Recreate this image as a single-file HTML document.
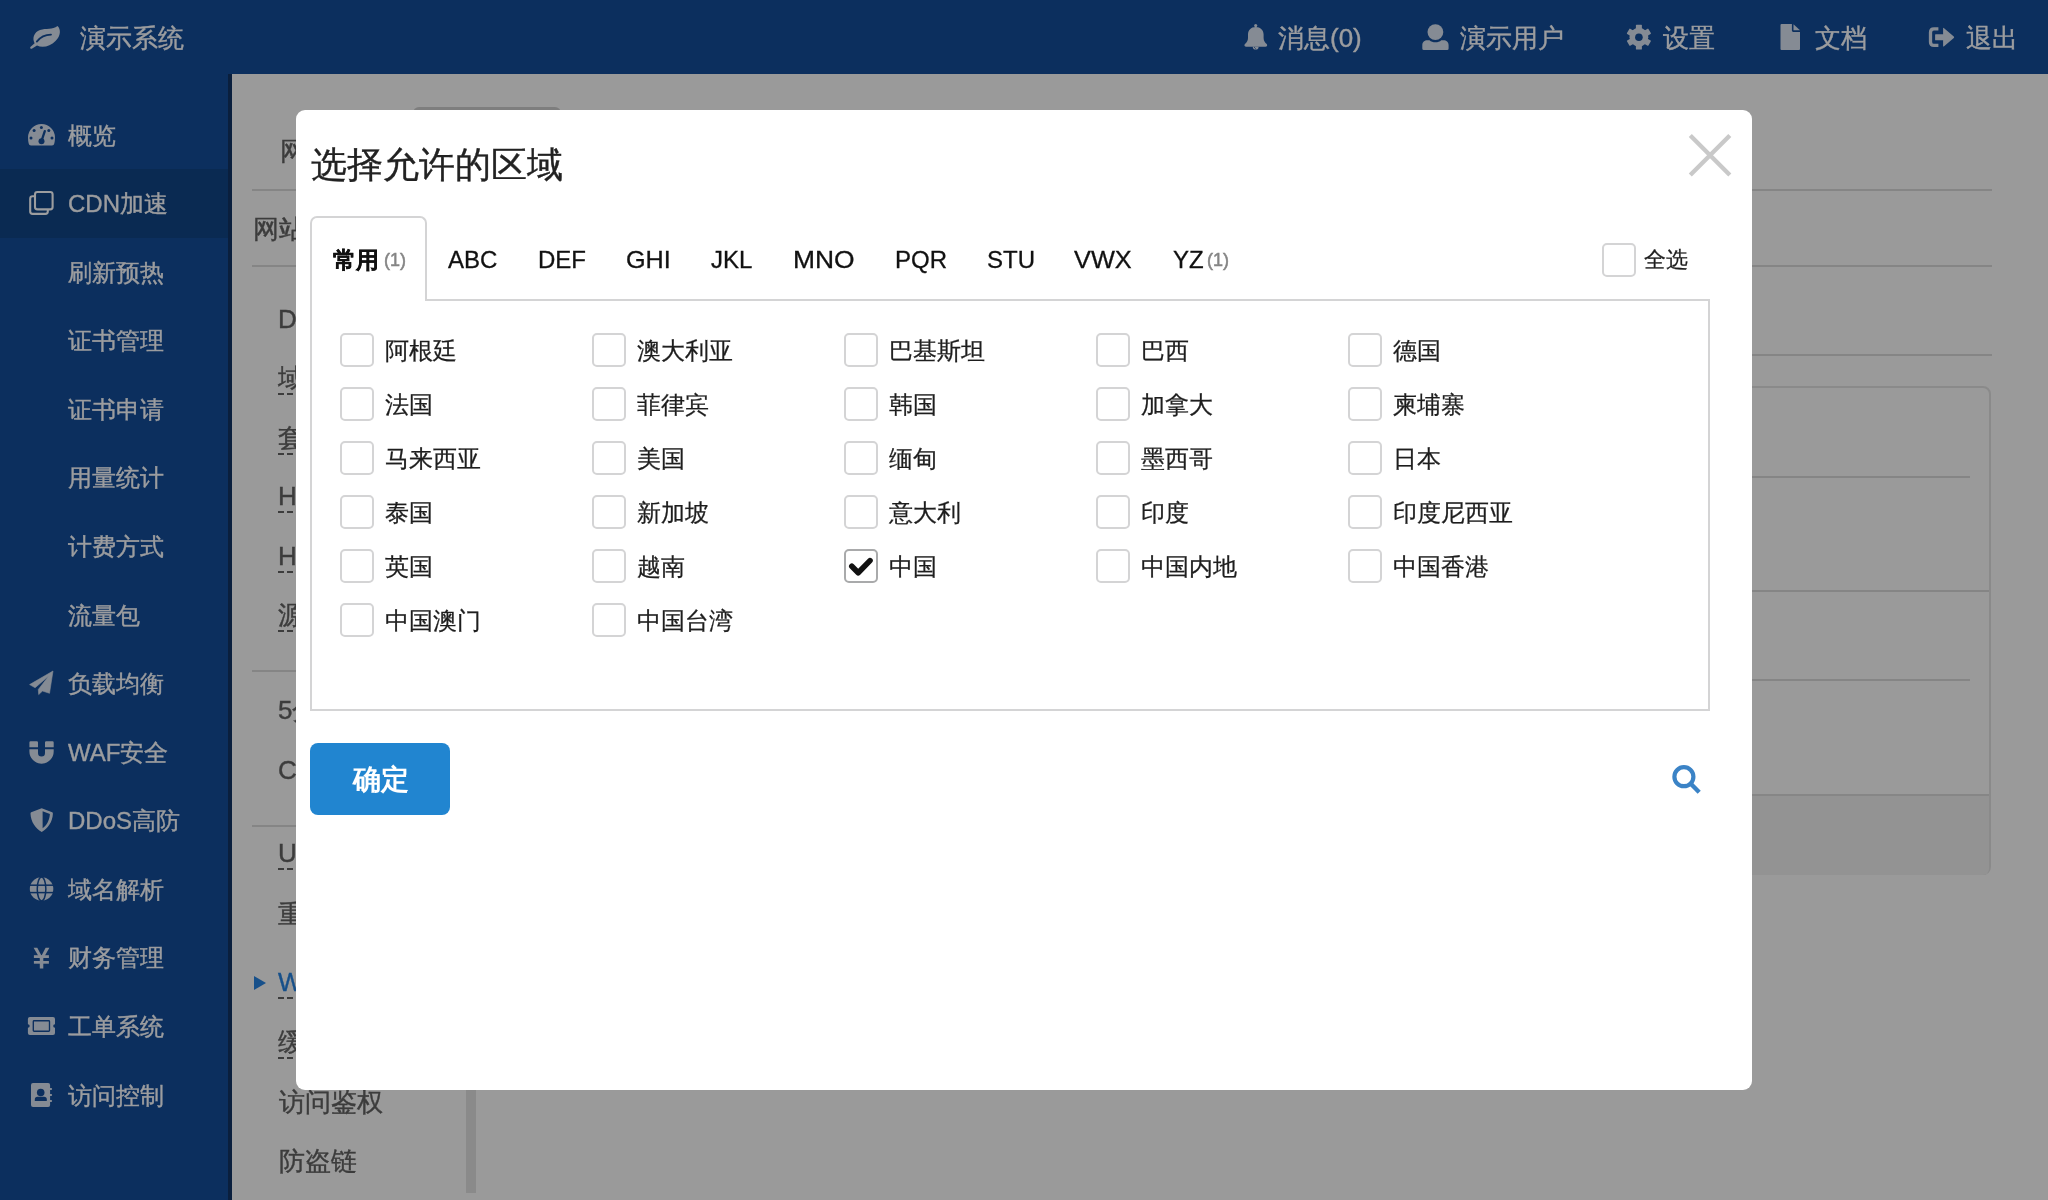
<!DOCTYPE html><html><head><meta charset="utf-8"><style>
html,body{margin:0;padding:0;width:2048px;height:1200px;overflow:hidden;background:#9a9a9a;font-family:"Liberation Sans", sans-serif;}
.t{position:absolute;white-space:nowrap;will-change:transform;}
.a{position:absolute;}
</style></head><body>
<div class="a" style="left:0;top:0;width:2048px;height:74px;background:#0c2f5e"></div>
<svg class="a" style="left:24px;top:20px" width="44" height="34" viewBox="24 20 44 34"><path d="M57.5 26 C61 29 61 36 55.5 41 C50.5 46 43 48.5 37 45.6 L32.2 48.6 C31 49.3 29.6 48.2 30.4 47 L34.6 43.2 C32 38.5 33.8 32.2 40 30 C46 28 52.5 30 57.5 26 Z" fill="#858b94"/><path d="M36.8 41.6 C40.5 36.8 44.5 34.6 51 34.6" fill="none" stroke="#0c2f5e" stroke-width="1.8" stroke-linecap="round"/></svg>
<div class="t" style="left:80px;top:25.0px;font-size:26px;line-height:26px;color:#9c9d9f;font-weight:normal;-webkit-text-stroke:0.4px currentColor;">演示系统</div>
<svg class="a" style="left:1238px;top:18px" width="36" height="38" viewBox="1238 18 36 38"><path d="M1255.7 26.9 C1251 26.9 1248 30.2 1248 34.5 V38 C1248 41 1246.5 42.6 1244.9 44.1 Q1244.1 45 1244.6 45.9 Q1245.1 46.7 1246.2 46.7 H1265.4 Q1266.5 46.7 1267 45.9 Q1267.5 45 1266.7 44.1 C1265.1 42.6 1263.6 41 1263.6 38 V34.5 C1263.6 30.2 1260.5 26.9 1255.7 26.9 Z" fill="#858b94"/><circle cx="1255.7" cy="25.6" r="1.6" fill="#858b94"/><path d="M1252.8 46.7 A2.9 2.9 0 0 0 1258.6 46.7 Z" fill="#858b94"/><path d="M1254.2 47.2 L1255.6 48.6" stroke="#0c2f5e" stroke-width="0.9"/></svg>
<div class="t" style="left:1278px;top:25.0px;font-size:26px;line-height:26px;color:#9c9d9f;font-weight:normal;-webkit-text-stroke:0.4px currentColor;">消息(0)</div>
<svg class="a" style="left:1416px;top:18px" width="40" height="38" viewBox="1416 18 40 38"><circle cx="1435.4" cy="32.1" r="7.9" fill="#858b94"/><path d="M1422.3 50 V45 C1422.3 42 1424.5 40.2 1427.5 40.2 H1429.5 C1431 41.6 1433 42.3 1435.4 42.3 C1437.8 42.3 1439.8 41.6 1441.3 40.2 H1443.4 C1446.4 40.2 1448.6 42 1448.6 45 V48.5 Q1448.6 50 1447.1 50 H1423.8 Q1422.3 50 1422.3 48.5 Z" fill="#858b94"/></svg>
<div class="t" style="left:1460px;top:25.0px;font-size:26px;line-height:26px;color:#9c9d9f;font-weight:normal;-webkit-text-stroke:0.4px currentColor;">演示用户</div>
<svg class="a" style="left:1620px;top:18px" width="38" height="38" viewBox="1620 18 38 38"><rect x="-3" y="-12.4" width="6" height="24.8" rx="0.6" transform="translate(1638.9 37.2) rotate(0)" fill="#858b94"/><rect x="-3" y="-12.4" width="6" height="24.8" rx="0.6" transform="translate(1638.9 37.2) rotate(60)" fill="#858b94"/><rect x="-3" y="-12.4" width="6" height="24.8" rx="0.6" transform="translate(1638.9 37.2) rotate(120)" fill="#858b94"/><circle cx="1638.9" cy="37.2" r="9.4" fill="#858b94"/><circle cx="1638.9" cy="37.2" r="3.8" fill="#0c2f5e"/></svg>
<div class="t" style="left:1663px;top:25.0px;font-size:26px;line-height:26px;color:#9c9d9f;font-weight:normal;-webkit-text-stroke:0.4px currentColor;">设置</div>
<svg class="a" style="left:1774px;top:18px" width="32" height="38" viewBox="1774 18 32 38"><path d="M1781.5 24 H1791.9 V30.6 Q1791.9 31.9 1793.2 31.9 H1800 V49 Q1800 50 1799 50 H1781.5 Q1780.5 50 1780.5 49 V25 Q1780.5 24 1781.5 24 Z" fill="#858b94"/><path d="M1793.5 24.2 L1800 30.3 H1793.5 Z" fill="#858b94"/></svg>
<div class="t" style="left:1815px;top:25.0px;font-size:26px;line-height:26px;color:#9c9d9f;font-weight:normal;-webkit-text-stroke:0.4px currentColor;">文档</div>
<svg class="a" style="left:1922px;top:18px" width="38" height="38" viewBox="1922 18 38 38"><path d="M1938.4 28.9 H1934 Q1930.5 28.9 1930.5 32.4 V41.9 Q1930.5 45.4 1934 45.4 H1938.4" fill="none" stroke="#858b94" stroke-width="3.3"/><path d="M1935.6 34.2 H1943.1 V28.4 Q1943.1 27.3 1944.1 28.2 L1953.8 36.5 Q1954.5 37.2 1953.8 37.9 L1944.1 46.2 Q1943.1 47.1 1943.1 46 V40.3 H1935.6 Q1935.1 40.3 1935.1 39.8 V34.7 Q1935.1 34.2 1935.6 34.2 Z" fill="#858b94"/></svg>
<div class="t" style="left:1966px;top:25.0px;font-size:26px;line-height:26px;color:#9c9d9f;font-weight:normal;-webkit-text-stroke:0.4px currentColor;">退出</div>
<div class="a" style="left:0;top:74px;width:228px;height:1126px;background:#0c2f5e"></div>
<div class="a" style="left:228px;top:74px;width:4px;height:1126px;background:#0a1f3d"></div>
<div class="a" style="left:0;top:169px;width:228px;height:69px;background:#0a2a52"></div>
<div class="t" style="left:68px;top:123.5px;font-size:24px;line-height:24px;color:#9c9d9f;font-weight:normal;-webkit-text-stroke:0.4px currentColor;">概览</div>
<div class="t" style="left:68px;top:192.1px;font-size:24px;line-height:24px;color:#9c9d9f;font-weight:normal;-webkit-text-stroke:0.4px currentColor;">CDN加速</div>
<div class="t" style="left:68px;top:260.6px;font-size:24px;line-height:24px;color:#9c9d9f;font-weight:normal;-webkit-text-stroke:0.4px currentColor;">刷新预热</div>
<div class="t" style="left:68px;top:329.2px;font-size:24px;line-height:24px;color:#9c9d9f;font-weight:normal;-webkit-text-stroke:0.4px currentColor;">证书管理</div>
<div class="t" style="left:68px;top:397.8px;font-size:24px;line-height:24px;color:#9c9d9f;font-weight:normal;-webkit-text-stroke:0.4px currentColor;">证书申请</div>
<div class="t" style="left:68px;top:466.3px;font-size:24px;line-height:24px;color:#9c9d9f;font-weight:normal;-webkit-text-stroke:0.4px currentColor;">用量统计</div>
<div class="t" style="left:68px;top:534.9px;font-size:24px;line-height:24px;color:#9c9d9f;font-weight:normal;-webkit-text-stroke:0.4px currentColor;">计费方式</div>
<div class="t" style="left:68px;top:603.5px;font-size:24px;line-height:24px;color:#9c9d9f;font-weight:normal;-webkit-text-stroke:0.4px currentColor;">流量包</div>
<div class="t" style="left:68px;top:672.1px;font-size:24px;line-height:24px;color:#9c9d9f;font-weight:normal;-webkit-text-stroke:0.4px currentColor;">负载均衡</div>
<div class="t" style="left:68px;top:740.6px;font-size:24px;line-height:24px;color:#9c9d9f;font-weight:normal;-webkit-text-stroke:0.4px currentColor;">WAF安全</div>
<div class="t" style="left:68px;top:809.2px;font-size:24px;line-height:24px;color:#9c9d9f;font-weight:normal;-webkit-text-stroke:0.4px currentColor;">DDoS高防</div>
<div class="t" style="left:68px;top:877.8px;font-size:24px;line-height:24px;color:#9c9d9f;font-weight:normal;-webkit-text-stroke:0.4px currentColor;">域名解析</div>
<div class="t" style="left:68px;top:946.3px;font-size:24px;line-height:24px;color:#9c9d9f;font-weight:normal;-webkit-text-stroke:0.4px currentColor;">财务管理</div>
<div class="t" style="left:68px;top:1014.9px;font-size:24px;line-height:24px;color:#9c9d9f;font-weight:normal;-webkit-text-stroke:0.4px currentColor;">工单系统</div>
<div class="t" style="left:68px;top:1083.5px;font-size:24px;line-height:24px;color:#9c9d9f;font-weight:normal;-webkit-text-stroke:0.4px currentColor;">访问控制</div>
<svg class="a" style="left:22px;top:118px" width="40" height="34" viewBox="22 118 40 34"><path d="M31 145.6 Q29 145.6 28.7 143.5 Q28 140.5 28 137.5 A13.5 13.5 0 0 1 55 137.5 Q55 140.5 54.3 143.5 Q54 145.6 52 145.6 Z" fill="#858b94"/><g fill="#0c2f5e"><circle cx="41.4" cy="127.5" r="1.5"/><circle cx="34.1" cy="130.6" r="1.5"/><circle cx="48.8" cy="130.6" r="1.5"/><circle cx="31" cy="137.9" r="1.5"/><circle cx="52" cy="137.9" r="1.5"/><circle cx="41.5" cy="141.2" r="3"/></g><path d="M41.5 141 L44.8 131.2" stroke="#0c2f5e" stroke-width="2.3" stroke-linecap="round"/></svg>
<svg class="a" style="left:22px;top:186px" width="40" height="34" viewBox="22 186 40 34"><rect x="35" y="192" width="17.6" height="17.4" rx="2.4" fill="none" stroke="#9c9d9f" stroke-width="2.1"/><path d="M34 196.3 H32.6 Q30.2 196.3 30.2 198.7 V211.5 Q30.2 213.9 32.6 213.9 H45.4 Q47.8 213.9 47.8 211.5 V209.4" fill="none" stroke="#9c9d9f" stroke-width="2.1"/></svg>
<svg class="a" style="left:24px;top:664px" width="36" height="36" viewBox="24 664 36 36"><path d="M53 671 L29.6 684.6 L35.1 687.7 L48.5 676.3 L38.3 689.5 L38.7 694.6 L42.5 691 L49.5 693.3 Z" fill="#858b94" stroke="#858b94" stroke-width="0.6" stroke-linejoin="round"/></svg>
<svg class="a" style="left:24px;top:734px" width="36" height="36" viewBox="24 734 36 36"><path d="M30.6 741.2 H36.8 Q38 741.2 38 742.4 V747.2 H29.4 V742.4 Q29.4 741.2 30.6 741.2 Z M46.2 741.2 H52.5 Q53.7 741.2 53.7 742.4 V747.2 H45 V742.4 Q45 741.2 46.2 741.2 Z M29.4 749.2 H38 V752.9 A3.5 3.5 0 0 0 45 752.9 V749.2 H53.7 V751.5 A12.15 12.15 0 0 1 29.4 751.5 Z" fill="#858b94"/></svg>
<svg class="a" style="left:24px;top:802px" width="36" height="36" viewBox="24 802 36 36"><path d="M41.7 808.2 L52.2 812.2 Q53 812.6 52.9 813.8 C52.5 822 48 828.5 41.7 831.9 C35.4 828.5 30.9 822 30.5 813.8 Q30.4 812.6 31.2 812.2 Z" fill="#858b94"/><path d="M42.6 811.2 L49.9 814.1 C49.5 820.5 46.6 825.6 42.6 828.3 Z" fill="#0c2f5e"/></svg>
<svg class="a" style="left:24px;top:871px" width="36" height="36" viewBox="24 871 36 36"><circle cx="41.55" cy="889" r="11.75" fill="#858b94"/><g fill="none" stroke="#0c2f5e" stroke-width="1.5"><ellipse cx="41.55" cy="889" rx="4.3" ry="11.9"/><line x1="29" y1="885.2" x2="54" y2="885.2"/><line x1="29" y1="892.6" x2="54" y2="892.6"/></g></svg>
<svg class="a" style="left:24px;top:940px" width="36" height="36" viewBox="24 940 36 36"><path d="M33.6 947.7 H37.3 L41.5 955.8 L45.6 947.7 H49.4 L43.3 958.5 V968.5 H39.8 V958.5 Z" fill="#858b94"/><rect x="33.9" y="955.2" width="15" height="2.8" fill="#858b94"/><rect x="33.9" y="961" width="15" height="2.7" fill="#858b94"/></svg>
<svg class="a" style="left:22px;top:1008px" width="40" height="36" viewBox="22 1008 40 36"><path d="M29.9 1016.9 H53 Q55 1016.9 55 1018.9 V1024.2 A1.8 1.8 0 0 0 55 1027.8 V1033 Q55 1035 53 1035 H29.9 Q27.9 1035 27.9 1033 V1027.8 A1.8 1.8 0 0 0 27.9 1024.2 V1018.9 Q27.9 1016.9 29.9 1016.9 Z" fill="#858b94"/><rect x="33.3" y="1020.7" width="16.2" height="10.5" rx="0.8" fill="none" stroke="#0c2f5e" stroke-width="1.35"/></svg>
<svg class="a" style="left:24px;top:1077px" width="36" height="36" viewBox="24 1077 36 36"><rect x="31" y="1083" width="19.1" height="24" rx="2" fill="#858b94"/><rect x="49" y="1088" width="3.1" height="2.1" rx="1" fill="#858b94"/><rect x="49" y="1094" width="3.1" height="2.1" rx="1" fill="#858b94"/><rect x="49" y="1100" width="3.1" height="2.1" rx="1" fill="#858b94"/><circle cx="40.7" cy="1092.5" r="3.8" fill="#0c2f5e"/><path d="M34.8 1101 V1099.5 Q34.8 1096.8 37.5 1096.8 H44.1 Q46.8 1096.8 46.8 1099.5 V1101 Z" fill="#0c2f5e"/></svg>
<div class="a" style="left:252px;top:189px;width:1740px;height:2px;background:#858585"></div>
<div class="a" style="left:252px;top:265px;width:1740px;height:2px;background:#858585"></div>
<div class="a" style="left:1000px;top:354px;width:992px;height:2px;background:#858585"></div>
<div class="a" style="left:252px;top:670px;width:1448px;height:2px;background:#858585"></div>
<div class="a" style="left:252px;top:825px;width:1448px;height:2px;background:#858585"></div>
<div class="a" style="left:413px;top:107px;width:148px;height:12px;background:#7e7e7e;border-radius:6px 6px 0 0"></div>
<div class="t" style="left:280px;top:138.0px;font-size:26px;line-height:26px;color:#3c3c3c;font-weight:normal;-webkit-text-stroke:0.4px currentColor;">网站</div>
<div class="t" style="left:253px;top:216.0px;font-size:26px;line-height:26px;color:#3c3c3c;font-weight:normal;-webkit-text-stroke:0.4px currentColor;">网站</div>
<div class="t" style="left:278px;top:305.5px;font-size:26px;line-height:26px;color:#3c3c3c;font-weight:normal;-webkit-text-stroke:0.4px currentColor;">DNS</div>
<div class="t" style="left:278px;top:365.0px;font-size:26px;line-height:26px;color:#3c3c3c;font-weight:normal;-webkit-text-stroke:0.4px currentColor;">域名</div>
<div class="a" style="left:278px;top:393px;width:60px;height:2px;background:repeating-linear-gradient(to right,#3c3c3c 0 5.6px,transparent 5.6px 9.2px)"></div>
<div class="t" style="left:278px;top:425.0px;font-size:26px;line-height:26px;color:#3c3c3c;font-weight:normal;-webkit-text-stroke:0.4px currentColor;">套餐</div>
<div class="a" style="left:278px;top:453px;width:60px;height:2px;background:repeating-linear-gradient(to right,#3c3c3c 0 5.6px,transparent 5.6px 9.2px)"></div>
<div class="t" style="left:278px;top:483.0px;font-size:26px;line-height:26px;color:#3c3c3c;font-weight:normal;-webkit-text-stroke:0.4px currentColor;">HTTP</div>
<div class="a" style="left:278px;top:511px;width:60px;height:2px;background:repeating-linear-gradient(to right,#3c3c3c 0 5.6px,transparent 5.6px 9.2px)"></div>
<div class="t" style="left:278px;top:543.0px;font-size:26px;line-height:26px;color:#3c3c3c;font-weight:normal;-webkit-text-stroke:0.4px currentColor;">HTTPS</div>
<div class="a" style="left:278px;top:571px;width:60px;height:2px;background:repeating-linear-gradient(to right,#3c3c3c 0 5.6px,transparent 5.6px 9.2px)"></div>
<div class="t" style="left:278px;top:602.0px;font-size:26px;line-height:26px;color:#3c3c3c;font-weight:normal;-webkit-text-stroke:0.4px currentColor;">源站</div>
<div class="a" style="left:278px;top:630px;width:60px;height:2px;background:repeating-linear-gradient(to right,#3c3c3c 0 5.6px,transparent 5.6px 9.2px)"></div>
<div class="t" style="left:278px;top:696.5px;font-size:26px;line-height:26px;color:#3c3c3c;font-weight:normal;-webkit-text-stroke:0.4px currentColor;">5分钟</div>
<div class="t" style="left:278px;top:756.5px;font-size:26px;line-height:26px;color:#3c3c3c;font-weight:normal;-webkit-text-stroke:0.4px currentColor;">CDN</div>
<div class="t" style="left:278px;top:840.0px;font-size:26px;line-height:26px;color:#3c3c3c;font-weight:normal;-webkit-text-stroke:0.4px currentColor;">URL</div>
<div class="a" style="left:278px;top:868px;width:60px;height:2px;background:repeating-linear-gradient(to right,#3c3c3c 0 5.6px,transparent 5.6px 9.2px)"></div>
<div class="t" style="left:278px;top:901.0px;font-size:26px;line-height:26px;color:#3c3c3c;font-weight:normal;-webkit-text-stroke:0.4px currentColor;">重定向</div>
<div class="t" style="left:278px;top:969.0px;font-size:26px;line-height:26px;color:#17508a;font-weight:normal;-webkit-text-stroke:0.4px currentColor;">WAF</div>
<div class="a" style="left:278px;top:997px;width:60px;height:2px;background:repeating-linear-gradient(to right,#3c3c3c 0 5.6px,transparent 5.6px 9.2px)"></div>
<svg class="a" style="left:253px;top:975px" width="14" height="16" viewBox="0 0 14 16"><path d="M1 1 L13 8 L1 15Z" fill="#17508a"/></svg>
<div class="t" style="left:278px;top:1029.0px;font-size:26px;line-height:26px;color:#3c3c3c;font-weight:normal;-webkit-text-stroke:0.4px currentColor;">缓存</div>
<div class="a" style="left:278px;top:1057px;width:60px;height:2px;background:repeating-linear-gradient(to right,#3c3c3c 0 5.6px,transparent 5.6px 9.2px)"></div>
<div class="t" style="left:279px;top:1089.0px;font-size:26px;line-height:26px;color:#3c3c3c;font-weight:normal;-webkit-text-stroke:0.4px currentColor;">访问鉴权</div>
<div class="t" style="left:279px;top:1147.5px;font-size:26px;line-height:26px;color:#3c3c3c;font-weight:normal;-webkit-text-stroke:0.4px currentColor;">防盗链</div>
<div class="a" style="left:466px;top:1080px;width:10px;height:113px;background:#8a8a8a"></div>
<div class="a" style="left:1700px;top:386px;width:287px;height:485px;border:2px solid #8a8a8a;border-radius:8px;background:#9a9a9a"></div>
<div class="a" style="left:1700px;top:476px;width:270px;height:2px;background:#858585"></div>
<div class="a" style="left:1700px;top:590px;width:289px;height:2px;background:#858585"></div>
<div class="a" style="left:1700px;top:679px;width:270px;height:2px;background:#858585"></div>
<div class="a" style="left:1700px;top:794px;width:289px;height:79px;background:#939393;border-top:2px solid #868686;border-radius:0 0 6px 6px"></div>
<div class="a" style="left:296px;top:110px;width:1456px;height:980px;background:#fff;border-radius:9px"></div>
<div class="t" style="left:311px;top:148.1px;font-size:35.5px;line-height:35.5px;color:#222;font-weight:normal;-webkit-text-stroke:0.35px currentColor;">选择允许的区域</div>
<svg class="a" style="left:1686px;top:131px" width="49" height="49" viewBox="0 0 49 49"><path d="M4.3 4.4 L43.8 44.1 M43.8 4.4 L4.3 44.1" stroke="#c9c9c9" stroke-width="4.3"/></svg>
<div class="a" style="left:310px;top:299px;width:1396px;height:408px;border:2px solid #d4d4d5"></div>
<div class="a" style="left:310px;top:216px;width:113px;height:83px;border:2px solid #d4d4d5;border-bottom:none;border-radius:7px 7px 0 0;background:#fff"></div>
<div class="a" style="left:312px;top:299px;width:113px;height:2px;background:#fff"></div>
<div class="t" style="left:332.5px;top:248.7px;font-size:23px;line-height:23px;color:#111;font-weight:bold;-webkit-text-stroke:0.3px currentColor;">常用</div>
<div class="t" style="left:383.5px;top:250.6px;font-size:18px;line-height:18px;color:#858585;font-weight:normal;-webkit-text-stroke:0.5px currentColor;">(1)</div>
<div class="t" style="left:448px;top:248.3px;font-size:24px;line-height:24px;color:#111;font-weight:normal;-webkit-text-stroke:0.3px currentColor;">ABC</div>
<div class="t" style="left:537.7px;top:248.3px;font-size:24px;line-height:24px;color:#111;font-weight:normal;-webkit-text-stroke:0.3px currentColor;">DEF</div>
<div class="t" style="left:626px;top:248.3px;font-size:24px;line-height:24px;color:#111;font-weight:normal;-webkit-text-stroke:0.3px currentColor;transform:scaleX(1.05);transform-origin:0 0;">GHI</div>
<div class="t" style="left:711px;top:248.3px;font-size:24px;line-height:24px;color:#111;font-weight:normal;-webkit-text-stroke:0.3px currentColor;">JKL</div>
<div class="t" style="left:793px;top:248.3px;font-size:24px;line-height:24px;color:#111;font-weight:normal;-webkit-text-stroke:0.3px currentColor;transform:scaleX(1.1);transform-origin:0 0;">MNO</div>
<div class="t" style="left:895px;top:248.3px;font-size:24px;line-height:24px;color:#111;font-weight:normal;-webkit-text-stroke:0.3px currentColor;">PQR</div>
<div class="t" style="left:986.5px;top:248.3px;font-size:24px;line-height:24px;color:#111;font-weight:normal;-webkit-text-stroke:0.3px currentColor;">STU</div>
<div class="t" style="left:1074px;top:248.3px;font-size:24px;line-height:24px;color:#111;font-weight:normal;-webkit-text-stroke:0.3px currentColor;transform:scaleX(1.055);transform-origin:0 0;">VWX</div>
<div class="t" style="left:1173px;top:248.3px;font-size:24px;line-height:24px;color:#111;font-weight:normal;-webkit-text-stroke:0.3px currentColor;">YZ</div>
<div class="t" style="left:1207px;top:250.6px;font-size:18px;line-height:18px;color:#858585;font-weight:normal;-webkit-text-stroke:0.5px currentColor;">(1)</div>
<div class="a" style="left:1602px;top:243px;width:30px;height:30px;border:2px solid #d4d4d5;border-radius:5px;background:#fff"></div>
<div class="t" style="left:1644px;top:248.5px;font-size:22px;line-height:22px;color:#1e1e1e;font-weight:normal;-webkit-text-stroke:0.25px currentColor;">全选</div>
<div class="a" style="left:340px;top:333px;width:30px;height:30px;border:2px solid #d4d4d5;border-radius:5px;background:#fff"></div>
<div class="t" style="left:385.3px;top:340.1px;font-size:23.5px;line-height:23.5px;color:#1e1e1e;font-weight:normal;-webkit-text-stroke:0.25px currentColor;">阿根廷</div>
<div class="a" style="left:592px;top:333px;width:30px;height:30px;border:2px solid #d4d4d5;border-radius:5px;background:#fff"></div>
<div class="t" style="left:637.3px;top:340.1px;font-size:23.5px;line-height:23.5px;color:#1e1e1e;font-weight:normal;-webkit-text-stroke:0.25px currentColor;">澳大利亚</div>
<div class="a" style="left:844px;top:333px;width:30px;height:30px;border:2px solid #d4d4d5;border-radius:5px;background:#fff"></div>
<div class="t" style="left:889.3px;top:340.1px;font-size:23.5px;line-height:23.5px;color:#1e1e1e;font-weight:normal;-webkit-text-stroke:0.25px currentColor;">巴基斯坦</div>
<div class="a" style="left:1096px;top:333px;width:30px;height:30px;border:2px solid #d4d4d5;border-radius:5px;background:#fff"></div>
<div class="t" style="left:1141.3px;top:340.1px;font-size:23.5px;line-height:23.5px;color:#1e1e1e;font-weight:normal;-webkit-text-stroke:0.25px currentColor;">巴西</div>
<div class="a" style="left:1348px;top:333px;width:30px;height:30px;border:2px solid #d4d4d5;border-radius:5px;background:#fff"></div>
<div class="t" style="left:1393.3px;top:340.1px;font-size:23.5px;line-height:23.5px;color:#1e1e1e;font-weight:normal;-webkit-text-stroke:0.25px currentColor;">德国</div>
<div class="a" style="left:340px;top:387px;width:30px;height:30px;border:2px solid #d4d4d5;border-radius:5px;background:#fff"></div>
<div class="t" style="left:385.3px;top:394.1px;font-size:23.5px;line-height:23.5px;color:#1e1e1e;font-weight:normal;-webkit-text-stroke:0.25px currentColor;">法国</div>
<div class="a" style="left:592px;top:387px;width:30px;height:30px;border:2px solid #d4d4d5;border-radius:5px;background:#fff"></div>
<div class="t" style="left:637.3px;top:394.1px;font-size:23.5px;line-height:23.5px;color:#1e1e1e;font-weight:normal;-webkit-text-stroke:0.25px currentColor;">菲律宾</div>
<div class="a" style="left:844px;top:387px;width:30px;height:30px;border:2px solid #d4d4d5;border-radius:5px;background:#fff"></div>
<div class="t" style="left:889.3px;top:394.1px;font-size:23.5px;line-height:23.5px;color:#1e1e1e;font-weight:normal;-webkit-text-stroke:0.25px currentColor;">韩国</div>
<div class="a" style="left:1096px;top:387px;width:30px;height:30px;border:2px solid #d4d4d5;border-radius:5px;background:#fff"></div>
<div class="t" style="left:1141.3px;top:394.1px;font-size:23.5px;line-height:23.5px;color:#1e1e1e;font-weight:normal;-webkit-text-stroke:0.25px currentColor;">加拿大</div>
<div class="a" style="left:1348px;top:387px;width:30px;height:30px;border:2px solid #d4d4d5;border-radius:5px;background:#fff"></div>
<div class="t" style="left:1393.3px;top:394.1px;font-size:23.5px;line-height:23.5px;color:#1e1e1e;font-weight:normal;-webkit-text-stroke:0.25px currentColor;">柬埔寨</div>
<div class="a" style="left:340px;top:441px;width:30px;height:30px;border:2px solid #d4d4d5;border-radius:5px;background:#fff"></div>
<div class="t" style="left:385.3px;top:448.1px;font-size:23.5px;line-height:23.5px;color:#1e1e1e;font-weight:normal;-webkit-text-stroke:0.25px currentColor;">马来西亚</div>
<div class="a" style="left:592px;top:441px;width:30px;height:30px;border:2px solid #d4d4d5;border-radius:5px;background:#fff"></div>
<div class="t" style="left:637.3px;top:448.1px;font-size:23.5px;line-height:23.5px;color:#1e1e1e;font-weight:normal;-webkit-text-stroke:0.25px currentColor;">美国</div>
<div class="a" style="left:844px;top:441px;width:30px;height:30px;border:2px solid #d4d4d5;border-radius:5px;background:#fff"></div>
<div class="t" style="left:889.3px;top:448.1px;font-size:23.5px;line-height:23.5px;color:#1e1e1e;font-weight:normal;-webkit-text-stroke:0.25px currentColor;">缅甸</div>
<div class="a" style="left:1096px;top:441px;width:30px;height:30px;border:2px solid #d4d4d5;border-radius:5px;background:#fff"></div>
<div class="t" style="left:1141.3px;top:448.1px;font-size:23.5px;line-height:23.5px;color:#1e1e1e;font-weight:normal;-webkit-text-stroke:0.25px currentColor;">墨西哥</div>
<div class="a" style="left:1348px;top:441px;width:30px;height:30px;border:2px solid #d4d4d5;border-radius:5px;background:#fff"></div>
<div class="t" style="left:1393.3px;top:448.1px;font-size:23.5px;line-height:23.5px;color:#1e1e1e;font-weight:normal;-webkit-text-stroke:0.25px currentColor;">日本</div>
<div class="a" style="left:340px;top:495px;width:30px;height:30px;border:2px solid #d4d4d5;border-radius:5px;background:#fff"></div>
<div class="t" style="left:385.3px;top:502.0px;font-size:23.5px;line-height:23.5px;color:#1e1e1e;font-weight:normal;-webkit-text-stroke:0.25px currentColor;">泰国</div>
<div class="a" style="left:592px;top:495px;width:30px;height:30px;border:2px solid #d4d4d5;border-radius:5px;background:#fff"></div>
<div class="t" style="left:637.3px;top:502.0px;font-size:23.5px;line-height:23.5px;color:#1e1e1e;font-weight:normal;-webkit-text-stroke:0.25px currentColor;">新加坡</div>
<div class="a" style="left:844px;top:495px;width:30px;height:30px;border:2px solid #d4d4d5;border-radius:5px;background:#fff"></div>
<div class="t" style="left:889.3px;top:502.0px;font-size:23.5px;line-height:23.5px;color:#1e1e1e;font-weight:normal;-webkit-text-stroke:0.25px currentColor;">意大利</div>
<div class="a" style="left:1096px;top:495px;width:30px;height:30px;border:2px solid #d4d4d5;border-radius:5px;background:#fff"></div>
<div class="t" style="left:1141.3px;top:502.0px;font-size:23.5px;line-height:23.5px;color:#1e1e1e;font-weight:normal;-webkit-text-stroke:0.25px currentColor;">印度</div>
<div class="a" style="left:1348px;top:495px;width:30px;height:30px;border:2px solid #d4d4d5;border-radius:5px;background:#fff"></div>
<div class="t" style="left:1393.3px;top:502.0px;font-size:23.5px;line-height:23.5px;color:#1e1e1e;font-weight:normal;-webkit-text-stroke:0.25px currentColor;">印度尼西亚</div>
<div class="a" style="left:340px;top:549px;width:30px;height:30px;border:2px solid #d4d4d5;border-radius:5px;background:#fff"></div>
<div class="t" style="left:385.3px;top:556.0px;font-size:23.5px;line-height:23.5px;color:#1e1e1e;font-weight:normal;-webkit-text-stroke:0.25px currentColor;">英国</div>
<div class="a" style="left:592px;top:549px;width:30px;height:30px;border:2px solid #d4d4d5;border-radius:5px;background:#fff"></div>
<div class="t" style="left:637.3px;top:556.0px;font-size:23.5px;line-height:23.5px;color:#1e1e1e;font-weight:normal;-webkit-text-stroke:0.25px currentColor;">越南</div>
<div class="a" style="left:844px;top:549px;width:30px;height:30px;border:2px solid #a9aaab;border-radius:5px;background:#fff"></div>
<svg class="a" style="left:848px;top:556px" width="26" height="21" viewBox="0 0 26 21"><path d="M3.8 10.3 L10.2 16.8 L22 4.6" fill="none" stroke="#111" stroke-width="5.6" stroke-linecap="round" stroke-linejoin="round"/></svg>
<div class="t" style="left:889.3px;top:556.0px;font-size:23.5px;line-height:23.5px;color:#1e1e1e;font-weight:normal;-webkit-text-stroke:0.25px currentColor;">中国</div>
<div class="a" style="left:1096px;top:549px;width:30px;height:30px;border:2px solid #d4d4d5;border-radius:5px;background:#fff"></div>
<div class="t" style="left:1141.3px;top:556.0px;font-size:23.5px;line-height:23.5px;color:#1e1e1e;font-weight:normal;-webkit-text-stroke:0.25px currentColor;">中国内地</div>
<div class="a" style="left:1348px;top:549px;width:30px;height:30px;border:2px solid #d4d4d5;border-radius:5px;background:#fff"></div>
<div class="t" style="left:1393.3px;top:556.0px;font-size:23.5px;line-height:23.5px;color:#1e1e1e;font-weight:normal;-webkit-text-stroke:0.25px currentColor;">中国香港</div>
<div class="a" style="left:340px;top:603px;width:30px;height:30px;border:2px solid #d4d4d5;border-radius:5px;background:#fff"></div>
<div class="t" style="left:385.3px;top:610.0px;font-size:23.5px;line-height:23.5px;color:#1e1e1e;font-weight:normal;-webkit-text-stroke:0.25px currentColor;">中国澳门</div>
<div class="a" style="left:592px;top:603px;width:30px;height:30px;border:2px solid #d4d4d5;border-radius:5px;background:#fff"></div>
<div class="t" style="left:637.3px;top:610.0px;font-size:23.5px;line-height:23.5px;color:#1e1e1e;font-weight:normal;-webkit-text-stroke:0.25px currentColor;">中国台湾</div>
<div class="a" style="left:310px;top:743px;width:140px;height:72px;background:#2185d0;border-radius:8px"></div>
<div class="t" style="left:352.5px;top:765.5px;font-size:28px;line-height:28px;color:#fff;font-weight:bold;">确定</div>
<svg class="a" style="left:1670px;top:763px" width="33" height="33" viewBox="0 0 33 33"><circle cx="13.9" cy="13.7" r="9.5" fill="none" stroke="#3b83c6" stroke-width="4.2"/><path d="M19.8 19.8 L29.2 29.2" stroke="#3b83c6" stroke-width="4.4"/></svg>
</body></html>
